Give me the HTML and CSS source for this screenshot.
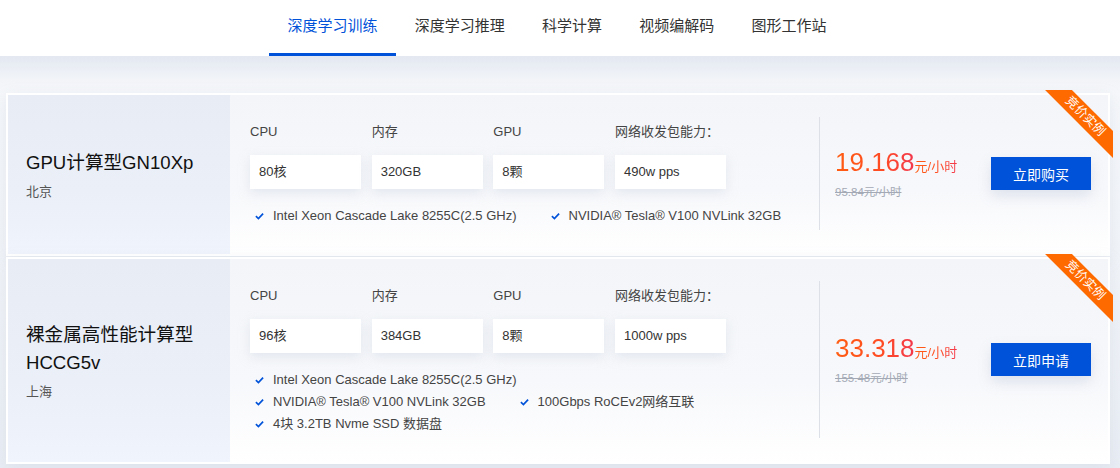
FILE: index.html
```html
<!DOCTYPE html>
<html lang="zh-CN">
<head>
<meta charset="utf-8">
<title>GPU</title>
<link rel="stylesheet" href="styles.css">
</head>
<body>
<nav class="nav">
  <a class="tab active">深度学习训练</a>
  <a class="tab">深度学习推理</a>
  <a class="tab">科学计算</a>
  <a class="tab">视频编解码</a>
  <a class="tab">图形工作站</a>
</nav>
<main class="main">
  <section class="card">
    <div class="left">
      <h3 class="title">GPU计算型GN10Xp</h3>
      <p class="region">北京</p>
    </div>
    <div class="specs">
      <div class="spec-row">
        <div class="spec"><div class="label">CPU</div><div class="box">80核</div></div>
        <div class="spec"><div class="label">内存</div><div class="box">320GB</div></div>
        <div class="spec"><div class="label">GPU</div><div class="box">8颗</div></div>
        <div class="spec"><div class="label">网络收发包能力：</div><div class="box">490w pps</div></div>
      </div>
      <div class="features">
        <div class="feat-row">
          <span class="feat"><svg class="chk" viewBox="0 0 10 8"><path d="M1 4.2 3.8 6.8 9 1.4"/></svg>Intel Xeon Cascade Lake 8255C(2.5 GHz)</span>
          <span class="feat"><svg class="chk" viewBox="0 0 10 8"><path d="M1 4.2 3.8 6.8 9 1.4"/></svg>NVIDIA® Tesla® V100 NVLink 32GB</span>
        </div>
      </div>
    </div>
    <div class="price">
      <div class="amount">
        <div class="now"><span class="num">19.168</span><span class="unit">元/小时</span></div>
        <div class="old">95.84元/小时</div>
      </div>
      <button class="btn">立即购买</button>
    </div>
    <div class="ribbon"><span>竞价实例</span></div>
  </section>
  <section class="card">
    <div class="left">
      <h3 class="title">裸金属高性能计算型HCCG5v</h3>
      <p class="region">上海</p>
    </div>
    <div class="specs">
      <div class="spec-row">
        <div class="spec"><div class="label">CPU</div><div class="box">96核</div></div>
        <div class="spec"><div class="label">内存</div><div class="box">384GB</div></div>
        <div class="spec"><div class="label">GPU</div><div class="box">8颗</div></div>
        <div class="spec"><div class="label">网络收发包能力：</div><div class="box">1000w pps</div></div>
      </div>
      <div class="features">
        <div class="feat-row">
          <span class="feat"><svg class="chk" viewBox="0 0 10 8"><path d="M1 4.2 3.8 6.8 9 1.4"/></svg>Intel Xeon Cascade Lake 8255C(2.5 GHz)</span>
        </div>
        <div class="feat-row">
          <span class="feat"><svg class="chk" viewBox="0 0 10 8"><path d="M1 4.2 3.8 6.8 9 1.4"/></svg>NVIDIA® Tesla® V100 NVLink 32GB</span>
          <span class="feat"><svg class="chk" viewBox="0 0 10 8"><path d="M1 4.2 3.8 6.8 9 1.4"/></svg>100Gbps RoCEv2网络互联</span>
        </div>
        <div class="feat-row">
          <span class="feat"><svg class="chk" viewBox="0 0 10 8"><path d="M1 4.2 3.8 6.8 9 1.4"/></svg>4块 3.2TB Nvme SSD 数据盘</span>
        </div>
      </div>
    </div>
    <div class="price">
      <div class="amount">
        <div class="now"><span class="num">33.318</span><span class="unit">元/小时</span></div>
        <div class="old">155.48元/小时</div>
      </div>
      <button class="btn">立即申请</button>
    </div>
    <div class="ribbon"><span>竞价实例</span></div>
  </section>
</main>
</body>
</html>
```
FILE: styles.css
```css
* { box-sizing: border-box; }
html, body { margin: 0; padding: 0; }
body {
  font-family: "Liberation Sans", "Noto Sans CJK SC", sans-serif;
  background: #eef1f6;
  color: #333;
  overflow: hidden;
}
.nav {
  height: 56px;
  background: #fff;
  display: flex;
  justify-content: center;
  padding-right: 6px;
}
.tab {
  padding: 0 18.6px;
  height: 56px;
  line-height: 52px;
  font-size: 15px;
  color: #333;
  border-bottom: 3px solid transparent;
  cursor: pointer;
}
.tab.active {
  color: #0052d9;
  border-bottom-color: #0052d9;
}
.main {
  background: linear-gradient(180deg, #e3e8f1 0, #f2f4f8 24px, #f5f7fa 36px, #f1f4f8 200px, #e9edf4 100%);
  padding: 37px 10px 4px 6px;
  height: 412px;
}
.card {
  position: relative;
  display: flex;
  border: 2px solid #fff;
  background: linear-gradient(180deg, #f3f5f8 0%, #f7f8fb 60%, #ffffff 100%);
  box-shadow: 0 4px 14px rgba(160, 172, 196, 0.18);
}
.card + .card { margin-top: 1px; }
.left {
  width: 222px;
  flex: none;
  background: linear-gradient(180deg, #e7ecf5 0%, #eaeff8 60%, #f0f4fc 100%);
  padding: 0 18px;
  display: flex;
  flex-direction: column;
  justify-content: center;
}
.title {
  margin: 0;
  font-size: 18.6px;
  font-weight: normal;
  line-height: 28px;
  color: #111;
}
.region {
  margin: 6px 0 0;
  font-size: 13px;
  line-height: 18px;
  color: #555;
}
.specs {
  flex: 1;
  padding: 27px 20px 27px;
}
.spec-row {
  display: flex;
  gap: 10.67px;
}
.spec { width: 111px; }
.label {
  font-size: 13px;
  line-height: 20px;
  color: #444;
  white-space: nowrap;
}
.box {
  margin-top: 13px;
  height: 34px;
  line-height: 34px;
  padding: 0 9px;
  background: #fff;
  font-size: 13px;
  color: #333;
  box-shadow: 0 4px 12px rgba(190, 200, 218, 0.35);
}
.features { margin-top: 16px; }
.feat-row {
  display: flex;
  gap: 29px;
}
.feat {
  display: inline-flex;
  align-items: center;
  font-size: 13px;
  line-height: 22px;
  color: #444;
  white-space: nowrap;
}
.chk {
  width: 9px;
  height: 8px;
  margin: 0 9px 0 5px;
  fill: none;
  stroke: #0052d9;
  stroke-width: 1.9;
}
.price {
  width: 289px;
  flex: none;
  margin: 22px 0 24px;
  border-left: 1px solid #dde0e6;
  display: flex;
  align-items: center;
  justify-content: space-between;
  padding: 0 17px 0 15px;
}
.now {
  display: flex;
  align-items: baseline;
  line-height: 30px;
}
.now .num, .now .unit {
  background: linear-gradient(90deg, #ff5d12 0%, #ff4a24 60%, #f2384f 100%);
  -webkit-background-clip: text;
  background-clip: text;
  color: transparent;
}
.num { font-size: 26px; }
.unit { font-size: 13px; }
.old {
  margin-top: 2px;
  font-size: 11.5px;
  line-height: 16px;
  color: #a3a9b5;
  text-decoration: line-through;
}
.btn {
  width: 100px;
  height: 33px;
  border: 0;
  background: #0052d9;
  color: #fff;
  font-family: inherit;
  font-size: 14px;
  box-shadow: 0 6px 14px rgba(120, 140, 180, 0.2);
  cursor: pointer;
}
.ribbon {
  position: absolute;
  top: -5px;
  right: -5px;
  width: 68px;
  height: 68px;
  overflow: hidden;
}
.ribbon span {
  position: absolute;
  left: -10px;
  top: 17px;
  width: 100px;
  height: 19px;
  line-height: 19px;
  text-align: center;
  background: #ff6a00;
  color: #fff;
  font-size: 12.5px;
  transform: rotate(45deg);
}
```
